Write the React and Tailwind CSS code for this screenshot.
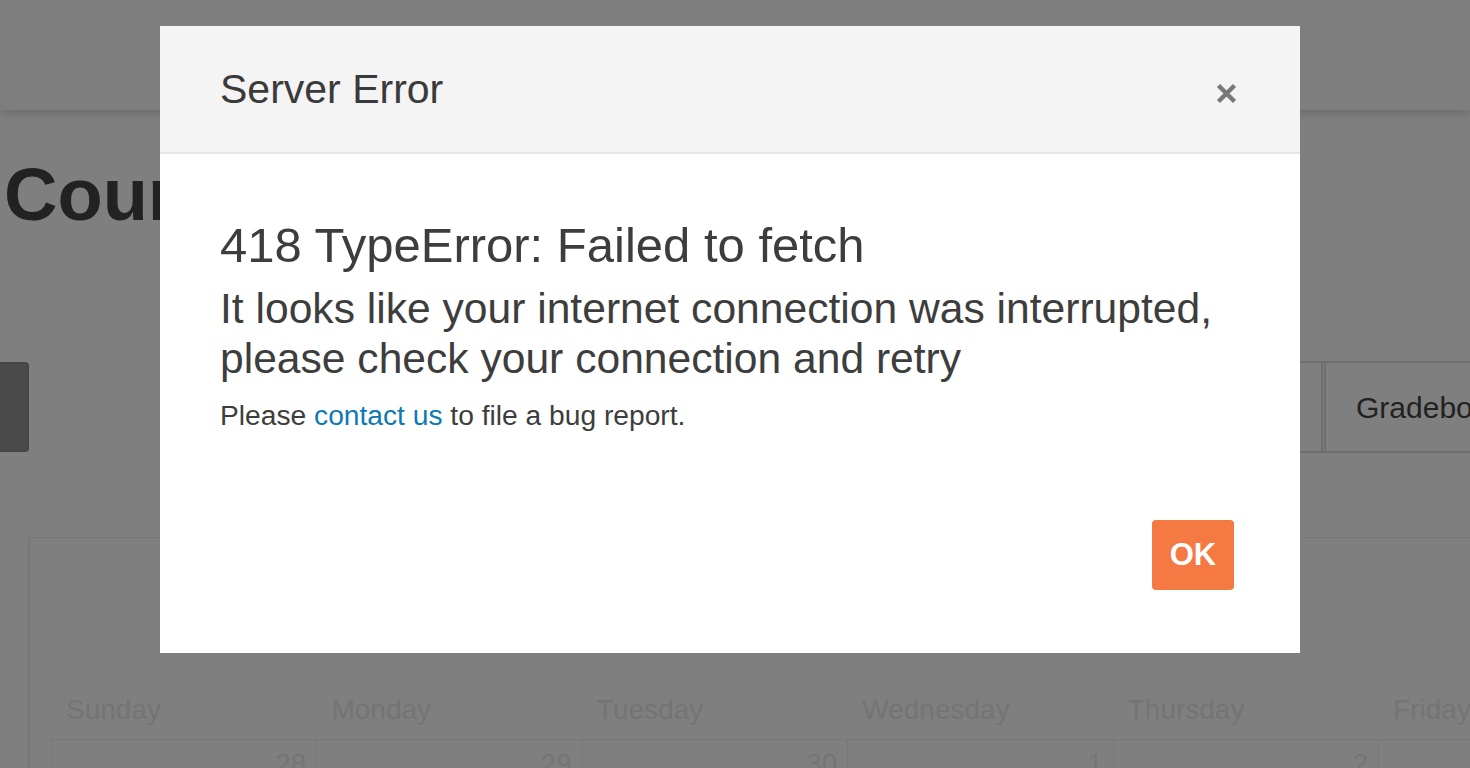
import React from "react";

const days = ["Sunday", "Monday", "Tuesday", "Wednesday", "Thursday", "Friday", "Saturday"];
const nums = ["28", "29", "30", "1", "2", "3", "4"];

export default function App() {
  return (
    <div className="relative h-screen w-full overflow-hidden bg-white font-['Liberation_Sans',Arial,sans-serif]">
      {/* underlying page */}
      <div className="relative z-10 h-[110px] bg-[#fdfdfd] shadow-[0_3px_10px_rgba(0,0,0,0.18)]"></div>
      <h1 className="mt-[48px] pl-[4px] text-[74px] font-bold leading-[74px] text-[#444] whitespace-nowrap">
        Course Calendar
      </h1>
      <div className="mt-[129px] flex h-[92px] items-stretch">
        <div className="my-[1px] w-[29px] rounded-r-[4px] border-2 border-l-0 border-[#8a8a8a] bg-[#949494]"></div>
        <div className="ml-[180px] flex flex-1 items-stretch border-y-2 border-[#dcdcdc]">
          <div className="w-[300px] border-l-2 border-[#dcdcdc]"></div>
          <div className="w-[300px] border-l-2 border-[#dcdcdc]"></div>
          <div className="flex-1 border-x-2 border-[#dcdcdc]"></div>
          <div className="ml-[1px] flex w-[146px] items-center border-l-2 border-[#dcdcdc] pl-[30px] text-[30px] text-[#444] whitespace-nowrap">
            Gradebook
          </div>
        </div>
      </div>
      <div className="ml-[28px] mt-[84px] border-l-2 border-t border-[#eeeeee] pl-[21px] pt-[152px]">
        <div className="grid w-[1858px] grid-cols-7">
          {days.map((d) => (
            <div key={d} className="h-[49px] pl-[15px] text-[28px] leading-[40px] text-[#e8e8e8]">
              {d}
            </div>
          ))}
          {nums.map((n, i) => (
            <div
              key={i}
              className="h-[120px] border-l border-t border-[#eeeeee] pr-[10px] pt-[4px] text-right text-[28px] leading-[40px] text-[#eaeaea]"
            >
              {n}
            </div>
          ))}
        </div>
      </div>

      {/* overlay */}
      <div className="absolute inset-0 z-20 bg-black/50"></div>

      {/* modal */}
      <div className="absolute left-[160px] top-[26px] z-30 w-[1140px] bg-white text-[#3d3d3d]">
        <div className="flex h-[128px] items-center justify-between border-b-2 border-[#e6e6e6] bg-[#f4f4f4] pl-[60px] pr-[63px]">
          <div className="text-[41px] leading-[41px] text-[#3a3a3a]">Server Error</div>
          <svg width="21" height="21" viewBox="0 0 21 21" className="mt-[8px]">
            <path d="M2.5 2.5 L18.5 18.5 M18.5 2.5 L2.5 18.5" stroke="#787878" strokeWidth="4.5" strokeLinecap="butt" />
          </svg>
        </div>
        <div className="px-[60px] pt-[65px]">
          <h2 className="text-[49px] leading-[53px] whitespace-nowrap">418 TypeError: Failed to fetch</h2>
          <p className="mt-[11px] text-[42.6px] leading-[50px] whitespace-nowrap">
            It looks like your internet connection was interrupted,
            <br />
            please check your connection and retry
          </p>
          <p className="mt-[12px] text-[28.2px] leading-[40px] whitespace-nowrap">
            Please <a className="text-[#0e7ab5]">contact us</a> to file a bug report.
          </p>
        </div>
        <div className="flex justify-end pb-[63px] pr-[66px] pt-[85px]">
          <button className="flex h-[70px] w-[82px] items-center justify-center rounded-[4px] bg-[#f47943] text-[31px] font-bold text-white">
            OK
          </button>
        </div>
      </div>
    </div>
  );
}
